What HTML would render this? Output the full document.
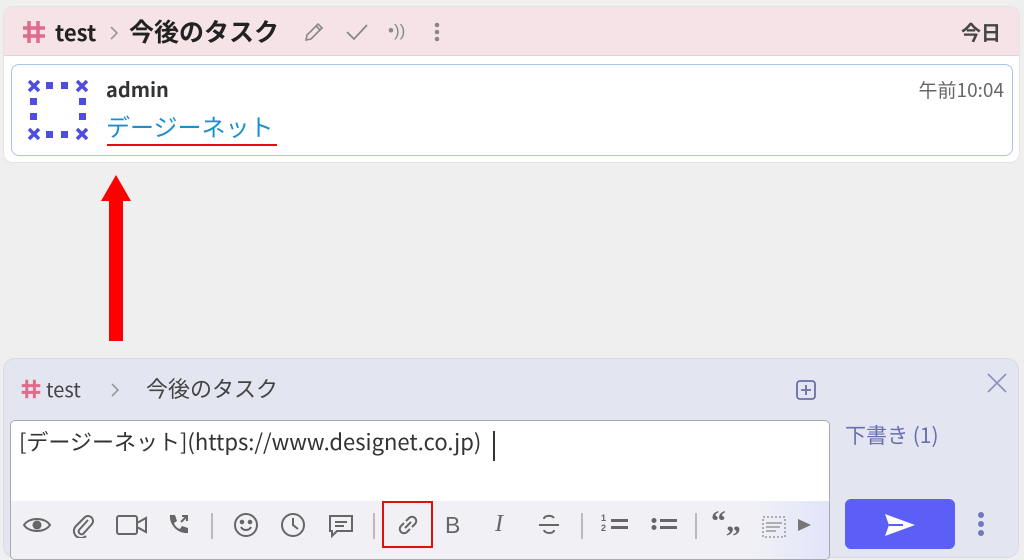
<!DOCTYPE html>
<html><head><meta charset="utf-8"><style>
*{box-sizing:border-box;margin:0;padding:0}
body{width:1024px;height:550px;background:#efefef;font-family:"Noto Sans CJK JP","Liberation Sans",sans-serif;position:relative;overflow:hidden;color:#222}
.abs{position:absolute}
.top{left:3px;top:6px;width:1017px;height:157px;background:#fff;border:1px solid #e4e4e4;border-radius:10px;overflow:hidden}
.hdr{left:0;top:0;width:100%;height:49px;background:#f5e3e8;border-bottom:1px solid #e6cfd6}
.msg{left:7px;top:57px;width:1002px;height:92px;border:1px solid #a9c3ea;border-radius:8px;background:#fff}
.bot{left:3px;top:358px;width:1016px;height:200px;background:#e3e5f0;border:1px solid #d8dae6;border-radius:12px}
.ta{left:6px;top:61px;width:820px;height:140px;background:#fff;border:1px solid #aaa;border-radius:5px;overflow:hidden}
.tb{left:0;top:80px;width:100%;height:60px;background:#f1f1f5}
svg{position:absolute}
.sep{position:absolute;top:12px;width:2px;height:26px;background:#bbb}
</style></head><body>
<div class="abs top">
 <div class="abs hdr">
  <svg style="left:17px;top:12px" width="26" height="26" viewBox="0 0 26 26" stroke="#e06b8b" stroke-width="3.5"><path d="M8 2v22M17 2v22M2 9h22M2 17h22"/></svg>
  <div class="abs" style="left:51px;top:12px;font-size:22px;line-height:26px;font-weight:bold">test</div>
  <svg style="left:105px;top:18px" width="10" height="16" fill="none" stroke="#999" stroke-width="1.6"><path d="M2 2l6 6-6 6"/></svg>
  <div class="abs" style="left:125px;top:10px;font-size:25px;line-height:28px;font-weight:bold">今後のタスク</div>
  <svg style="left:298px;top:13px" width="24" height="24" viewBox="0 0 24 24" fill="none" stroke="#888" stroke-width="1.6"><path d="M4 20l1-5L16 4l4 4L9 19z M14 6l4 4"/></svg>
  <svg style="left:340px;top:14px" width="26" height="22" viewBox="0 0 26 22" fill="none" stroke="#888" stroke-width="1.8"><path d="M3 11l7 7L23 4"/></svg>
  <div class="abs" style="left:384px;top:13px;font-size:17px;line-height:22px;color:#888;font-family:'Liberation Sans',sans-serif">•))</div>
  <svg style="left:429px;top:14px" width="8" height="22"><circle cx="4" cy="4" r="2.3" fill="#888"/><circle cx="4" cy="11" r="2.3" fill="#888"/><circle cx="4" cy="18" r="2.3" fill="#888"/></svg>
  <div class="abs" style="right:18px;top:12px;font-size:20px;line-height:26px;font-weight:bold;color:#444">今日</div>
 </div>
 <div class="abs msg">
  <svg style="left:16px;top:15px" width="60" height="60" viewBox="0 0 60 60" fill="#4f4ce0"><path d="M1 1l10 10M11 1L1 11M49 1l10 10M59 1L49 11M1 49l10 10M11 49L1 59M49 49l10 10M59 49L49 59" stroke="#4f4ce0" stroke-width="3.5"/><rect x="18" y="2" width="7" height="7"/><rect x="33" y="2" width="7" height="7"/><rect x="18" y="51" width="7" height="7"/><rect x="33" y="51" width="7" height="7"/><rect x="2" y="18" width="7" height="7"/><rect x="2" y="33" width="7" height="7"/><rect x="51" y="18" width="7" height="7"/><rect x="51" y="33" width="7" height="7"/></svg>
  <div class="abs" style="left:94px;top:12px;font-size:20px;line-height:24px;font-weight:bold;color:#333">admin</div>
  <div class="abs" style="left:94px;top:46px;font-size:24px;color:#1a8ed0;line-height:30px">デージーネット</div>
  <div class="abs" style="left:95px;top:79px;width:170px;height:2px;background:#e01010"></div>
  <div class="abs" style="right:8px;top:13px;font-size:19px;line-height:24px;color:#666">午前10:04</div>
 </div>
</div>
<svg style="left:100px;top:175px" width="32" height="166"><polygon points="16,0 31,26 1,26" fill="#f00"/><rect x="9" y="25" width="14" height="141" fill="#f00"/></svg>
<div class="abs bot">
 <svg style="left:16px;top:19px" width="22" height="22" viewBox="0 0 26 26" stroke="#e06b8b" stroke-width="3.5"><path d="M8 2v22M17 2v22M2 9h22M2 17h22"/></svg>
 <div class="abs" style="left:42px;top:18px;font-size:20px;line-height:24px;color:#444">test</div>
 <svg style="left:106px;top:23px" width="10" height="16" fill="none" stroke="#999" stroke-width="1.6"><path d="M2 2l6 6-6 6"/></svg>
 <div class="abs" style="left:142px;top:16px;font-size:22px;line-height:26px;color:#444">今後のタスク</div>
 <svg style="left:791px;top:20px" width="22" height="22" viewBox="0 0 22 22" fill="none" stroke="#6a6fa8" stroke-width="1.8"><rect x="2" y="2" width="18" height="18" rx="3"/><path d="M11 6v10M6 11h10"/></svg>
 <svg style="left:982px;top:13px" width="22" height="22" stroke="#8a8fc0" stroke-width="1.6"><path d="M2 2l18 18M20 2L2 20"/></svg>
 <div class="abs ta">
  <div class="abs" style="left:8px;top:7px;font-size:22px;line-height:26px;color:#333;white-space:nowrap">[デージーネット](https://www.designet.co.jp)</div>
  <div class="abs" style="left:482px;top:10px;width:2px;height:30px;background:#333"></div>
  <div class="abs tb">
   <div class="abs" style="right:0;top:0;width:80px;height:60px;background:linear-gradient(90deg,#f1f1f5,#e2e4fb)"></div>
   <svg style="left:12px;top:14px" width="28" height="20" viewBox="0 0 28 20"><path d="M1 10C6 2 22 2 27 10C22 18 6 18 1 10z" fill="none" stroke="#666" stroke-width="2"/><circle cx="14" cy="10" r="4.5" fill="#666"/></svg>
   <svg style="left:60px;top:11px" width="24" height="26" viewBox="0 0 24 26" fill="none" stroke="#666" stroke-width="2"><path d="M17 8L8 18a3 3 0 0 0 4 4L21 12a5 5 0 0 0-7-7L5 14a7 7 0 0 0 10 10"/></svg>
   <svg style="left:104px;top:13px" width="34" height="22" viewBox="0 0 34 22" fill="none" stroke="#666" stroke-width="2"><rect x="2" y="2" width="20" height="18" rx="2"/><path d="M22 9l9-5v14l-9-5z"/></svg>
   <svg style="left:155px;top:12px" width="24" height="24" viewBox="0 0 24 24" fill="#666"><path d="M4 2h5l2 6-3 2c1 3 3 5 6 6l2-3 6 2v5c-10 1-19-8-18-18z"/><path d="M15 9l6-6M16 3h5v5" stroke="#666" stroke-width="2" fill="none"/></svg>
   <div class="sep" style="left:200px"></div>
   <svg style="left:222px;top:11px" width="26" height="26" viewBox="0 0 26 26" fill="none" stroke="#666" stroke-width="2"><circle cx="13" cy="13" r="11"/><circle cx="9" cy="10" r="1.3" fill="#666"/><circle cx="17" cy="10" r="1.3" fill="#666"/><path d="M8 15c2 4 8 4 10 0"/></svg>
   <svg style="left:269px;top:11px" width="26" height="26" viewBox="0 0 26 26" fill="none" stroke="#666" stroke-width="2"><circle cx="13" cy="13" r="11"/><path d="M13 6v7l5 4"/></svg>
   <svg style="left:317px;top:12px" width="26" height="26" viewBox="0 0 26 26" fill="none" stroke="#666" stroke-width="2"><path d="M2 3h22v15H9l-5 5v-5H2z"/><path d="M7 9h12M7 13h9"/></svg>
   <div class="sep" style="left:362px"></div>
   <div class="abs" style="left:371px;top:0;width:51px;height:47px;border:2px solid #e01010"></div>
   <svg style="left:384px;top:11px" width="26" height="26" viewBox="0 0 26 26" fill="none" stroke="#666" stroke-width="2"><path d="M11 9l3-3a4 4 0 0 1 6 6l-3 3M15 17l-3 3a4 4 0 0 1-6-6l3-3M10 16l6-6"/></svg>
   <div class="abs" style="left:434px;top:11px;font-size:23px;line-height:26px;color:#666;font-family:'Liberation Sans',sans-serif">B</div>
   <div class="abs" style="left:484px;top:10px;font-size:24px;line-height:26px;color:#666;font-style:italic;font-family:'Liberation Serif',serif">I</div>
   <svg style="left:526px;top:12px" width="24" height="24" viewBox="0 0 24 24" fill="none" stroke="#666" stroke-width="2"><path d="M17 5c-2-3-10-3-10 1M2 12h20M7 17c1 4 10 4 10 0"/></svg>
   <div class="sep" style="left:570px"></div>
   <div class="abs" style="left:590px;top:12px;font-size:9px;color:#666;line-height:10px;font-weight:bold;font-family:'Liberation Sans',sans-serif">1<br>2</div>
   <svg style="left:600px;top:16px" width="18" height="14" fill="#666"><rect x="0" y="2" width="17" height="3"/><rect x="0" y="9" width="17" height="3"/></svg>
   <svg style="left:640px;top:16px" width="26" height="14" fill="#666"><circle cx="3" cy="3.5" r="2.5"/><circle cx="3" cy="10.5" r="2.5"/><rect x="9" y="2" width="17" height="3"/><rect x="9" y="9" width="17" height="3"/></svg>
   <div class="sep" style="left:684px"></div>
   <div class="abs" style="left:700px;top:4px;font-size:30px;line-height:34px;font-weight:bold;color:#666;font-family:'Liberation Serif',serif">“„</div>
   <svg style="left:751px;top:12px" width="26" height="26" fill="none" stroke="#999" stroke-width="1.5" stroke-dasharray="2 2"><rect x="1" y="4" width="22" height="20"/><path d="M4 10h16M4 14h14M4 18h10" stroke-dasharray="none"/></svg>
   <svg style="left:787px;top:18px" width="14" height="12"><polygon points="0,0 13,6 0,12" fill="#777"/></svg>
  </div>
 </div>
 <div class="abs" style="left:841px;top:63px;font-size:21px;line-height:26px;color:#6a6fb0">下書き (1)</div>
 <div class="abs" style="left:841px;top:140px;width:110px;height:50px;background:#5b5ff5;border-radius:6px">
  <svg style="left:39px;top:14px" width="32" height="24" viewBox="0 0 32 24"><path d="M1 1L31 12L1 23L5 12z" fill="#fff"/><path d="M5 12h14" stroke="#5b5ff5" stroke-width="2"/></svg>
 </div>
 <svg style="left:973px;top:152px" width="8" height="26"><circle cx="4" cy="4" r="3" fill="#7477c0"/><circle cx="4" cy="13" r="3" fill="#7477c0"/><circle cx="4" cy="22" r="3" fill="#7477c0"/></svg>
</div>
</body></html>
